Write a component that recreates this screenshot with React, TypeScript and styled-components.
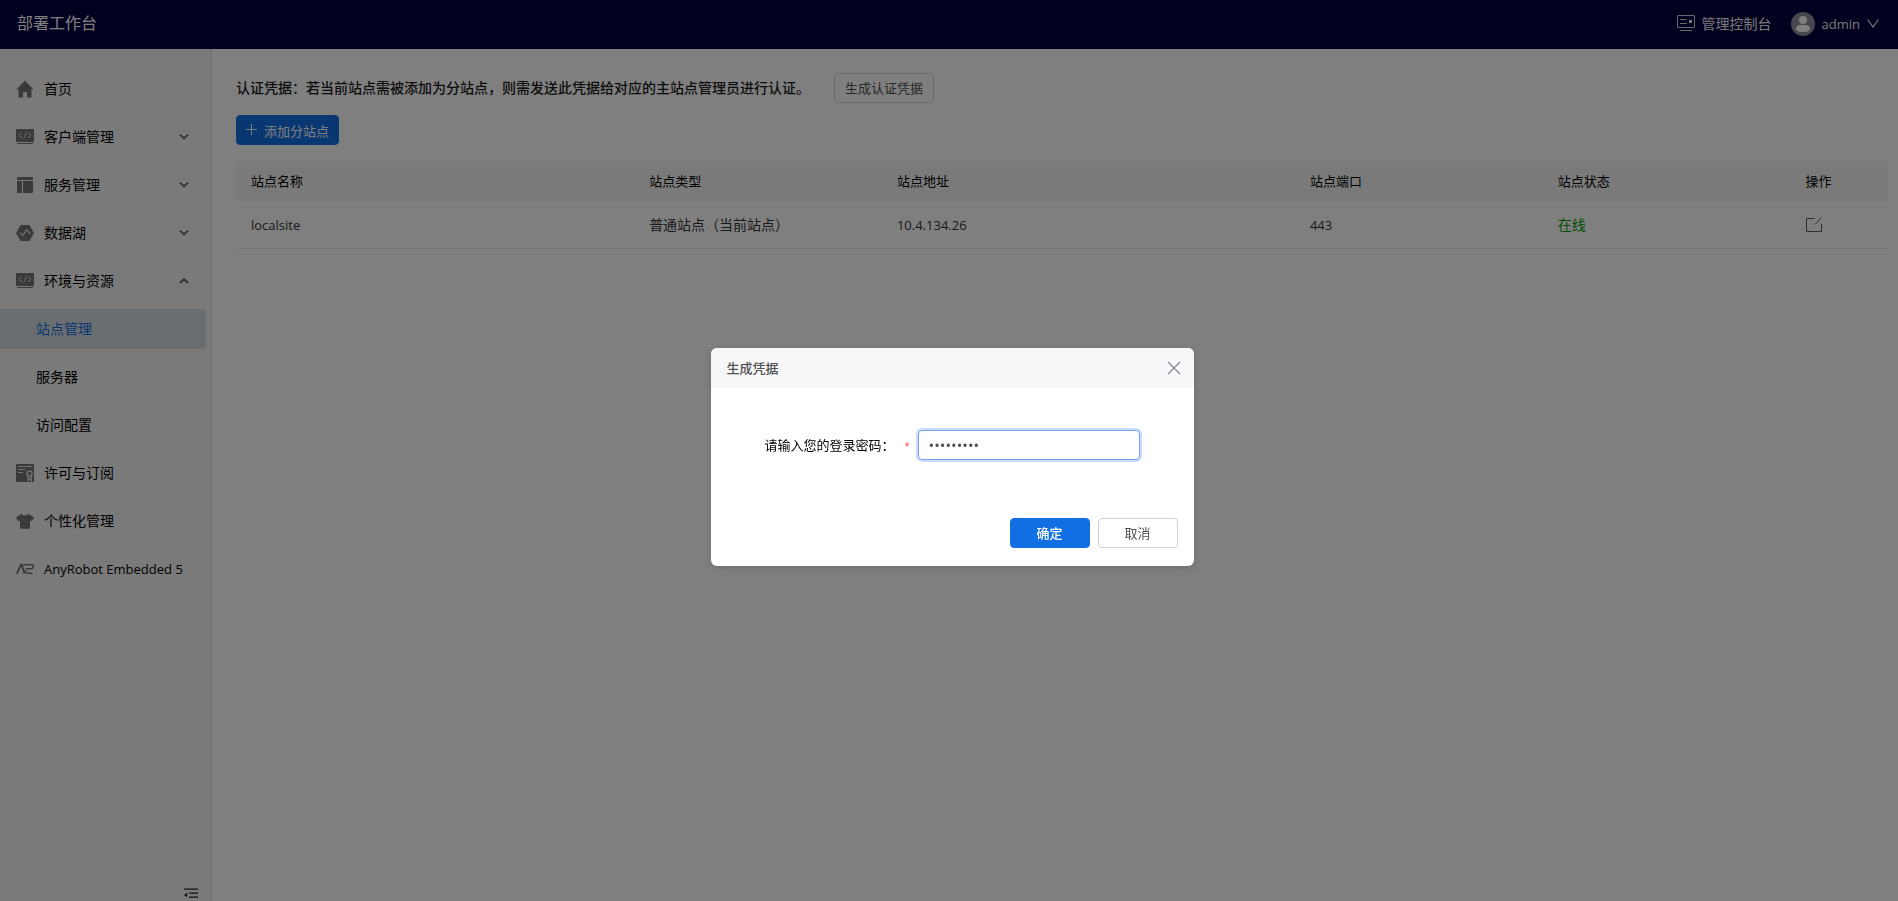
import React from "react";
import styled, { createGlobalStyle } from "styled-components";

const GlobalStyle = createGlobalStyle`
  *, *::before, *::after { box-sizing: border-box; }
  body {
    margin: 0;
    background: #fff;
    color: #000;
    font-family: "Open Sans", "Noto Sans CJK SC", sans-serif;
    font-size: 14px;
    font-weight: 400;
    line-height: 20px;
  }
  button, input { font-family: inherit; font-weight: inherit; }
`;

const Page = styled.div`
  min-height: 100vh;
  display: flex;
  flex-direction: column;
`;

const Header = styled.header`
  height: 49px;
  padding: 0 19px 2px 17px;
  display: flex;
  align-items: center;
  justify-content: space-between;
  background: #04003f;
  color: #fff;
`;

const Brand = styled.h1`
  margin: 0;
  padding-bottom: 2px;
  font-size: 16px;
  line-height: 24px;
  font-weight: 400;
`;

const HeaderTools = styled.div`
  display: flex;
  align-items: center;
  gap: 19px;
`;

const HeaderButton = styled.button<{ $latin?: boolean }>`
  display: flex;
  align-items: center;
  gap: 7px;
  padding: 0;
  border: 0;
  background: none;
  color: #f0f0f0;
  font-size: ${(p) => (p.$latin ? 13 : 14)}px;
  line-height: 20px;
`;

const Body = styled.div`
  flex: 1;
  display: flex;
`;

const Sidebar = styled.nav`
  width: 212px;
  flex: none;
  display: flex;
  flex-direction: column;
  justify-content: space-between;
  padding: 20px 5px 0 0;
  background: #f5f5f5;
  border-right: 1px solid #dcdcdc;
`;

const Menu = styled.ul`
  margin: 0;
  padding: 0;
  list-style: none;
  display: flex;
  flex-direction: column;
  gap: 8px;
`;

const MenuLink = styled.a<{ $sub?: boolean; $active?: boolean }>`
  height: 40px;
  display: flex;
  align-items: center;
  gap: 10px;
  padding: 0 17px 0 ${(p) => (p.$sub ? 36 : 16)}px;
  border-radius: 0 2px 2px 0;
  background: ${(p) => (p.$active ? "#d7dce3" : "transparent")};
  color: ${(p) => (p.$active ? "#126ee3" : "#000")};
  text-decoration: none;
  white-space: nowrap;
`;

const MenuLabel = styled.span<{ $latin?: boolean }>`
  flex: 1;
  font-size: ${(p) => (p.$latin ? 13 : 14)}px;
`;

const CollapseButton = styled.button`
  align-self: flex-end;
  display: flex;
  margin-right: 8px;
  padding: 0;
  border: 0;
  background: none;
`;

const Main = styled.main`
  flex: 1;
  min-width: 0;
  padding: 24px 10px 24px 24px;
`;

const Notice = styled.div`
  display: flex;
  align-items: center;
  gap: 24px;
  margin-bottom: 12px;
  color: #1a1a1a;
`;

const NoticeText = styled.span`
  font-weight: 500;
`;

const Button = styled.button<{ $primary?: boolean; $wide?: boolean }>`
  height: 30px;
  min-width: ${(p) => (p.$wide ? 80 : 0)}px;
  padding: 0 10px;
  display: inline-flex;
  align-items: center;
  justify-content: center;
  gap: 7px;
  border: 1px solid ${(p) => (p.$primary ? "#126ee3" : "#d0d0da")};
  border-radius: 4px;
  background: ${(p) => (p.$primary ? "#126ee3" : "#fff")};
  color: ${(p) => (p.$primary ? "#fff" : "#505050")};
  font-size: 13px;
  font-weight: ${(p) => (p.$primary && p.$wide ? 500 : "inherit")};
  line-height: 20px;
`;

const AddButton = styled(Button)`
  padding: 2px 9px 0;
`;

const Table = styled.table`
  width: 100%;
  margin-top: 16px;
  table-layout: fixed;
  border-collapse: separate;
  border-spacing: 0;
`;

const Th = styled.th<{ $width?: string }>`
  width: ${(p) => p.$width ?? "auto"};
  height: 40px;
  padding: 0 15px;
  background: #f5f5f5;
  text-align: left;
  font-size: 13px;
  font-weight: inherit;
`;

const Td = styled.td<{ $latin?: boolean; $online?: boolean }>`
  height: 48px;
  padding: 0 15px;
  border-bottom: 1px solid #ededed;
  color: ${(p) => (p.$online ? "#00a000" : "#333")};
  font-size: ${(p) => (p.$latin ? 13 : 14)}px;
`;

const IconButton = styled.button`
  display: flex;
  padding: 0;
  border: 0;
  background: none;
`;

const Mask = styled.div`
  position: fixed;
  inset: 0;
  display: flex;
  align-items: center;
  justify-content: center;
  padding: 12px 0 0 6px;
  background: rgba(0, 0, 0, 0.5);
`;

const Dialog = styled.section`
  width: 483px;
  border-radius: 6px;
  overflow: hidden;
  background: #fff;
  box-shadow: 0 2px 8px rgba(0, 0, 0, 0.15);
`;

const DialogHeader = styled.header`
  height: 40px;
  padding: 0 13px 0 16px;
  display: flex;
  align-items: center;
  justify-content: space-between;
  background: #f7f7fa;
`;

const DialogTitle = styled.h2`
  margin: 0;
  color: #505050;
  font-size: 13px;
  font-weight: 500;
  line-height: 20px;
`;

const Field = styled.div`
  display: flex;
  align-items: center;
  padding: 42px 54px 58px;
  font-size: 13px;
`;

const FieldLabel = styled.label`
  flex: 1;
  display: flex;
  align-items: center;
  justify-content: space-between;
  padding-right: 8px;
`;

const Required = styled.span`
  padding-top: 4px;
  color: #ff4d4f;
  font-family: "Liberation Sans", sans-serif;
  font-size: 12px;
`;

const PasswordInput = styled.input`
  width: 222px;
  height: 30px;
  padding: 0 10px;
  border: 1px solid #7aa0f0;
  border-radius: 4px;
  outline: none;
  box-shadow: 0 0 0 2px #ccdcfa;
  background: #fff;
  color: #505050;
  font-family: "Open Sans", sans-serif;
  font-size: 15px;
`;

const DialogFooter = styled.footer`
  display: flex;
  justify-content: flex-end;
  gap: 8px;
  padding: 0 16px 18px;
`;

const GRAY = "#757575";

const HomeIcon = () => (
  <svg width="18" height="18" viewBox="0 0 18 18" fill={GRAY} aria-hidden>
    <path d="M9 0.5L17.6 9.6H15.5V17.5H11V12.2H7V17.5H2.5V9.6H0.4Z" />
  </svg>
);

const CodeIcon = () => (
  <svg width="18" height="18" viewBox="0 0 18 18" aria-hidden>
    <rect x="0" y="1" width="18" height="13" rx="1" fill={GRAY} />
    <rect x="1" y="15" width="16" height="1" fill={GRAY} />
    <path d="M6 4.500L3 7.300l3 2.800M12 4.500l3 2.800-3 2.800M10.300 3.800L7.700 10.800" fill="none" stroke="#d8d8d8" strokeWidth="1" />
  </svg>
);

const LayoutIcon = () => (
  <svg width="18" height="18" viewBox="0 0 18 18" fill={GRAY} aria-hidden>
    <path d="M1 2a1 1 0 0 1 1-1h14a1 1 0 0 1 1 1V4H1zM1 5h5v12H2a1 1 0 0 1-1-1zM7 5h10v11a1 1 0 0 1-1 1H7z" />
  </svg>
);

const LakeIcon = () => (
  <svg width="18" height="18" viewBox="0 0 18 18" aria-hidden>
    <path d="M5.2 1h7.6a1 1 0 0 1 .9.5l4 6.9a1 1 0 0 1 0 1.1l-4 6.9a1 1 0 0 1-.9.5H5.2a1 1 0 0 1-.9-.5l-4-6.9a1 1 0 0 1 0-1.1l4-6.9a1 1 0 0 1 .9-.5z" fill={GRAY} />
    <path d="M3.800 8.600l3 3 3.800-6.100 3.600 4.400" fill="none" stroke="#e4e4e4" strokeWidth="1.200" />
  </svg>
);

const LicenseIcon = () => (
  <svg width="18" height="18" viewBox="0 0 18 18" aria-hidden>
    <rect width="18" height="18" rx="1.200" fill={GRAY} />
    <path d="M2 2.500h14M2 5.500h7M2 8.500h5" stroke="#e4e4e4" strokeWidth="1" fill="none" />
    <path d="M12 11.500v5l1.600-1.600 1.600 1.600v-5" stroke="#e4e4e4" strokeWidth="1.300" fill="none" />
    <circle cx="13.600" cy="9.400" r="2.500" stroke="#e4e4e4" strokeWidth="1.400" fill={GRAY} />
  </svg>
);

const ShirtIcon = () => (
  <svg width="18" height="18" viewBox="0 0 18 18" fill={GRAY} aria-hidden>
    <path d="M5.6 1.8L0.3 5.2a.5.5 0 0 0-.1.7l1.700 3a.6.6 0 0 0 .8.2L4 8.500v7.400a.8.8 0 0 0 .8.8h8.400a.8.8 0 0 0 .8-.8V8.500l1.300.6a.6.6 0 0 0 .8-.2l1.700-3a.5.5 0 0 0-.1-.7L12.400 1.800C11.800 3 10.600 3.600 9 3.600S6.200 3 5.600 1.800z" />
  </svg>
);

const RobotIcon = () => (
  <svg width="18" height="18" viewBox="0 0 18 18" fill="none" stroke={GRAY} strokeWidth="2" aria-hidden>
    <path d="M0.800 13.800L4.600 5.400Q5 4.800 5.800 4.800L8.600 13.800" />
    <path d="M7.500 4.800H16a1 1 0 0 1 1 1v1.400a1.600 1.600 0 0 1-1.600 1.600H9.500M9.500 10.500l1.600 3.300M12 13.200h4.200" strokeWidth="1.600" />
  </svg>
);

const Chevron = ({ up }: { up?: boolean }) => (
  <svg width="10" height="10" viewBox="0 0 10 10" fill="none" stroke="#666" strokeWidth="2" aria-hidden>
    <path d={up ? "M1 7l4-3.800L9 7" : "M1 2.600l4 3.800 4-3.800"} />
  </svg>
);

const ConsoleIcon = () => (
  <svg width="18" height="18" viewBox="0 0 18 18" fill="none" stroke="#d0d0d4" aria-hidden>
    <rect x="0.500" y="0.500" width="17" height="12" rx="0.500" />
    <path d="M3 4.500h6M3 8.500h7M3 15.500h12" />
    <rect x="12" y="5" width="3" height="3" fill="#f0f0f0" stroke="none" />
  </svg>
);

const Avatar = () => (
  <svg width="24" height="24" viewBox="0 0 24 24" aria-hidden>
    <circle cx="12" cy="12" r="12" fill="#8f919b" />
    <circle cx="12" cy="8" r="4" fill="#fff" />
    <path d="M5 17c0-2.800 1.600-4 3.600-4h6.800c2 0 3.600 1.200 3.600 4 0 2-3 3-7 3s-7-1-7-3z" fill="#fff" />
  </svg>
);

const DownIcon = () => (
  <svg width="12" height="12" viewBox="0 0 12 12" fill="none" stroke="#f0f0f0" strokeWidth="1.200" aria-hidden>
    <path d="M0.600 1.500L6 9l5.400-7.500" />
  </svg>
);

const CollapseIcon = () => (
  <svg width="14" height="14" viewBox="0 0 14 14" fill="#222" aria-hidden>
    <path d="M0 1.500h14v1.300H0zM5 5.500h9v1.300H5zM5 9.500h9v1.300H5zM0 8L3.200 5.800v4.400z" />
  </svg>
);

const PlusIcon = () => (
  <svg width="11" height="14" viewBox="0 0 11 14" stroke="#fff" aria-hidden>
    <path d="M0 5.500h11M5.500 0v11" />
  </svg>
);

const EditIcon = () => (
  <svg width="16" height="16" viewBox="0 0 16 16" fill="none" stroke="#505a6a" aria-hidden>
    <path d="M8.500 1.500h-8v13h15v-8M9 7.500L15.500 0.500" />
  </svg>
);

const CloseIcon = () => (
  <svg width="14" height="14" viewBox="0 0 14 14" fill="none" stroke="#868a9c" strokeWidth="1.300" aria-hidden>
    <path d="M1 1l12 12M13 1L1 13" />
  </svg>
);

type MenuEntry = {
  label: string;
  icon?: React.ReactNode;
  fold?: "open" | "closed";
  active?: boolean;
  latin?: boolean;
};

const menu: MenuEntry[] = [
  { label: "首页", icon: <HomeIcon /> },
  { label: "客户端管理", icon: <CodeIcon />, fold: "closed" },
  { label: "服务管理", icon: <LayoutIcon />, fold: "closed" },
  { label: "数据湖", icon: <LakeIcon />, fold: "closed" },
  { label: "环境与资源", icon: <CodeIcon />, fold: "open" },
  { label: "站点管理", active: true },
  { label: "服务器" },
  { label: "访问配置" },
  { label: "许可与订阅", icon: <LicenseIcon /> },
  { label: "个性化管理", icon: <ShirtIcon /> },
  { label: "AnyRobot Embedded 5", icon: <RobotIcon />, latin: true },
];

const columns = [
  { title: "站点名称", width: "24.1%" },
  { title: "站点类型", width: "15%" },
  { title: "站点地址", width: "25%" },
  { title: "站点端口", width: "15%" },
  { title: "站点状态", width: "15%" },
  { title: "操作" },
];

export default function App() {
  return (
    <>
      <GlobalStyle />
      <Page>
        <Header>
          <Brand>部署工作台</Brand>
          <HeaderTools>
            <HeaderButton type="button">
              <ConsoleIcon />
              管理控制台
            </HeaderButton>
            <HeaderButton type="button" $latin>
              <Avatar />
              admin
              <DownIcon />
            </HeaderButton>
          </HeaderTools>
        </Header>
        <Body>
          <Sidebar>
            <Menu>
              {menu.map((item) => (
                <li key={item.label}>
                  <MenuLink href="#" $sub={!item.icon} $active={item.active}>
                    {item.icon}
                    <MenuLabel $latin={item.latin}>{item.label}</MenuLabel>
                    {item.fold && <Chevron up={item.fold === "open"} />}
                  </MenuLink>
                </li>
              ))}
            </Menu>
            <CollapseButton type="button" aria-label="收起菜单">
              <CollapseIcon />
            </CollapseButton>
          </Sidebar>
          <Main>
            <Notice>
              <NoticeText>认证凭据：若当前站点需被添加为分站点，则需发送此凭据给对应的主站点管理员进行认证。</NoticeText>
              <Button type="button">生成认证凭据</Button>
            </Notice>
            <AddButton type="button" $primary>
              <PlusIcon />
              添加分站点
            </AddButton>
            <Table>
              <thead>
                <tr>
                  {columns.map((c) => (
                    <Th key={c.title} scope="col" $width={c.width}>
                      {c.title}
                    </Th>
                  ))}
                </tr>
              </thead>
              <tbody>
                <tr>
                  <Td $latin>localsite</Td>
                  <Td>普通站点（当前站点）</Td>
                  <Td $latin>10.4.134.26</Td>
                  <Td $latin>443</Td>
                  <Td $online>在线</Td>
                  <Td>
                    <IconButton type="button" aria-label="编辑">
                      <EditIcon />
                    </IconButton>
                  </Td>
                </tr>
              </tbody>
            </Table>
          </Main>
        </Body>
      </Page>
      <Mask>
        <Dialog role="dialog" aria-modal="true" aria-labelledby="dialog-title">
          <DialogHeader>
            <DialogTitle id="dialog-title">生成凭据</DialogTitle>
            <IconButton type="button" aria-label="关闭">
              <CloseIcon />
            </IconButton>
          </DialogHeader>
          <Field>
            <FieldLabel htmlFor="password">
              请输入您的登录密码：
              <Required>*</Required>
            </FieldLabel>
            <PasswordInput id="password" type="password" defaultValue="password1" />
          </Field>
          <DialogFooter>
            <Button type="button" $primary $wide>
              确定
            </Button>
            <Button type="button" $wide>
              取消
            </Button>
          </DialogFooter>
        </Dialog>
      </Mask>
    </>
  );
}
